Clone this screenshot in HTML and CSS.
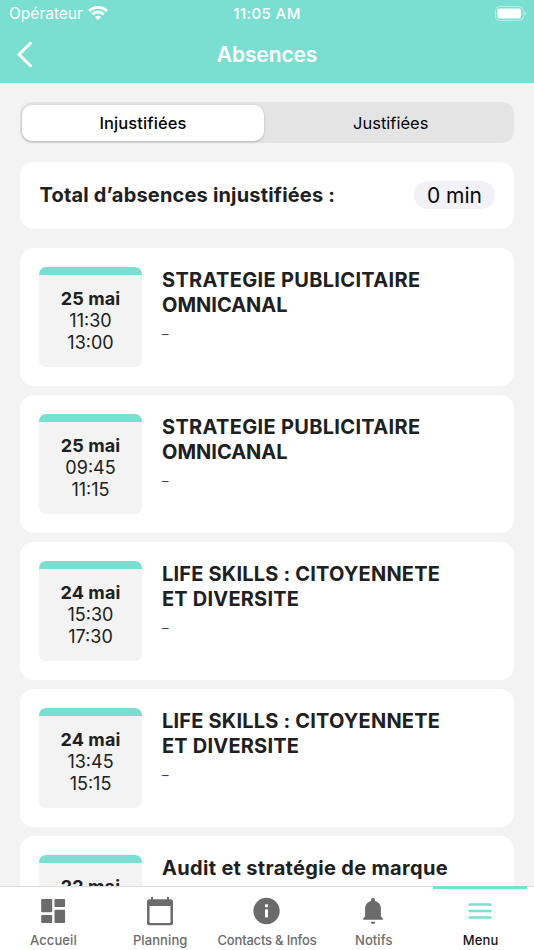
FILE: index.html
```html
<!DOCTYPE html>
<html lang="fr">
<head>
<meta charset="utf-8">
<meta name="viewport" content="width=device-width, initial-scale=1">
<title>Absences</title>
<link rel="stylesheet" href="styles.css">
</head>
<body>
<div class="app">
  <header class="header">
    <div class="status">
      <div class="carrier"><span>Opérateur</span>
        <svg width="20" height="16" viewBox="0 0 20 16" fill="none" stroke="#fff" stroke-width="2.9"><path d="M1.200 6a12.400 12.400 0 0 1 17.600 0"/><path d="M4.400 9.400a7.900 7.900 0 0 1 11.200 0"/><path d="M6.900 12.100a4.400 4.400 0 0 1 6.200 0L10 15.200z" fill="#fff" stroke="none"/></svg>
      </div>
      <time class="clock">11:05 AM</time>
      <svg class="battery" width="32" height="15" viewBox="0 0 32 15"><rect x=".5" y=".5" width="27.5" height="14" rx="4" fill="none" stroke="#fff" stroke-opacity=".45"/><rect x="2.3" y="2.6" width="23.7" height="9.800" rx="2" fill="#fff"/><path d="M29.5 5.2q1.7.5 1.7 2.2t-1.7 2.2z" fill="#fff" fill-opacity=".5"/></svg>
    </div>
    <div class="bar">
      <svg class="back" width="16" height="26" viewBox="0 0 16 26" fill="none" stroke="#fff" stroke-width="3" stroke-linecap="round" stroke-linejoin="round"><path d="M14.500 2.300 3 13.500l11.500 11.200"/></svg>
      <h1>Absences</h1>
    </div>
  </header>
  <main class="content">
    <div class="segments"><button class="segment selected">Injustifiées</button><button class="segment other">Justifiées</button></div>
    <section class="total"><h2>Total d’absences injustifiées :</h2><span class="pill">0 min</span></section>
    <section class="list">
      <article class="card"><div class="date"><b>25 mai</b><span>11:30</span><span>13:00</span></div><div class="info"><h3>STRATEGIE PUBLICITAIRE <span class="tight">OMNICANAL</span></h3><p>–</p></div></article>
      <article class="card"><div class="date"><b>25 mai</b><span>09:45</span><span>11:15</span></div><div class="info"><h3>STRATEGIE PUBLICITAIRE <span class="tight">OMNICANAL</span></h3><p>–</p></div></article>
      <article class="card"><div class="date"><b>24 mai</b><span>15:30</span><span>17:30</span></div><div class="info"><h3 class="life">LIFE SKILLS : CITOYENNETE<br>ET DIVERSITE</h3><p>–</p></div></article>
      <article class="card"><div class="date"><b>24 mai</b><span>13:45</span><span>15:15</span></div><div class="info"><h3 class="life">LIFE SKILLS : CITOYENNETE<br>ET DIVERSITE</h3><p>–</p></div></article>
      <article class="card"><div class="date"><b>22 mai</b></div><div class="info"><h3>Audit et stratégie de marque</h3></div></article>
    </section>
  </main>
  <nav class="tabs">
    <a class="tab"><svg width="32" height="32" viewBox="0 0 32 32" fill="currentColor"><rect x="4.200" y="4" width="11" height="13.300" rx="1"/><rect x="17.500" y="4" width="10.600" height="8" rx="1"/><rect x="4.200" y="20" width="11" height="8" rx="1"/><rect x="17.500" y="14.700" width="10.600" height="13.300" rx="1"/></svg><span>Accueil</span></a>
    <a class="tab"><svg width="32" height="32" viewBox="0 0 32 32"><path fill="currentColor" fill-rule="evenodd" d="M7 2.200q1.200-1 2 0v2h14v-2q.8-1 2 0v2h1.500q2.500 0 2.500 2.500v21q0 2.500-2.500 2.500h-21Q3 30.200 3 27.700v-21q0-2.500 2.500-2.500H7zM5.500 11v15.700q0 1.300 1.300 1.300h18.400q1.300 0 1.300-1.300V11z"/></svg><span>Planning</span></a>
    <a class="tab"><svg width="32" height="32" viewBox="0 0 32 32"><circle cx="16.500" cy="16" r="13.200" fill="currentColor"/><rect x="15" y="9.200" width="3" height="3" rx=".8" fill="#fff"/><rect x="15" y="14.300" width="3" height="8.300" rx=".8" fill="#fff"/></svg><span class="contacts">Contacts &amp; Infos</span></a>
    <a class="tab"><svg width="32" height="32" viewBox="0 0 32 32" fill="currentColor"><path d="M16 3q2 0 2 2v.9c4.100 1 5.900 4.200 5.900 8v7.600l2 2v1.200H6.100v-1.200l2-2v-7.600c0-3.800 1.800-7 5.900-8V5q0-2 2-2zM13.600 26.800h4.800q-.5 2.200-2.400 2.200t-2.400-2.200z"/></svg><span>Notifs</span></a>
    <a class="tab active"><svg width="32" height="32" viewBox="0 0 32 32" fill="none" stroke="#7adfd1" stroke-width="2.500" stroke-linecap="round"><path d="M5.500 9.500h21M5.500 16h21M5.500 22.500h21"/></svg><span>Menu</span></a>
  </nav>
</div>
</body>
</html>
```
FILE: styles.css
```css
* { box-sizing: border-box; }
body { margin: 0; font-family: Inter, sans-serif; color: #202020; background: #f3f3f3; }
h1, h2, h3, p { margin: 0; }
.app { height: 950px; display: flex; flex-direction: column; overflow: hidden; }
.header { height: 83px; flex: none; background: #7adfd1; color: #fff; }
.status { height: 28px; display: grid; grid-template-columns: 1fr auto 1fr; align-items: center; padding: 0 7px 0 9px; font-size: 15px; line-height: 20px; }
.carrier { display: flex; align-items: center; gap: 5px; font-size: 15.500px; }
.carrier svg { position: relative; top: -1px; }
.clock { font-weight: 500; letter-spacing: .4px; position: relative; left: -1px; }
.battery { justify-self: end; position: relative; top: -1px; }
.bar { height: 54px; display: grid; grid-template-columns: 1fr auto 1fr; align-items: center; padding: 0 16px; }
h1 { font-size: 21px; line-height: 28px; font-weight: 600; letter-spacing: -.1px; }
.back { position: relative; top: -1px; }
.content { flex: 1; min-height: 0; overflow: hidden; padding: 19px 20px 0; }
.segments { height: 41px; display: grid; grid-template-columns: 1fr 1fr; padding: 2.500px; border-radius: 12px; background: #e4e4e4; }
.segment { border: 0; padding: 0; border-radius: 10px; background: none; font: 500 16.500px/20px Inter, sans-serif; color: #050505; }
.selected { background: #fff; margin: 0 3px 0 -.5px; box-shadow: 0 1px 3px #0003; letter-spacing: .1px; }
.other { font-weight: 400; padding-left: 3px; }
.total { height: 67px; margin-top: 19px; padding: 0 19px 1px 20px; display: flex; align-items: center; justify-content: space-between; background: #fff; border-radius: 14px; }
h2 { font-size: 20px; line-height: 26px; font-weight: 650; letter-spacing: .18px; margin-left: -.5px; }
.pill { width: 81px; height: 28px; border-radius: 14px; background: #f2f1f7; color: #050505; font-size: 21px; line-height: 29px; text-align: center; }
.list { display: grid; gap: 9px; margin-top: 19px; }
.card { height: 138px; padding: 19px; display: flex; align-items: flex-start; gap: 20px; background: #fff; border-radius: 14px; }
.date { width: 103px; height: 100px; flex: none; display: flex; flex-direction: column; align-items: center; padding-top: 13px; border-top: 8px solid #7adfd1; border-radius: 7px; background: #f3f3f3; font-size: 18px; line-height: 22px; }
.date b { font-weight: 650; letter-spacing: .1px; }
.info { width: 290px; padding-top: 1px; }
h3 { font-size: 20px; line-height: 24.500px; font-weight: 650; letter-spacing: .32px; }
.life { letter-spacing: .2px; }
.tight { letter-spacing: 0; }
.info p { font-size: 13px; line-height: 20px; margin-top: 7px; color: #444; }
.tabs { height: 64px; flex: none; display: grid; grid-template-columns: repeat(5, 1fr); background: #fff; border-top: 1px solid #dedede; }
.tab { position: relative; display: flex; flex-direction: column; align-items: center; padding-top: 8px; color: #6b6b6b; font-size: 13px; line-height: 18px; font-weight: 450; letter-spacing: .1px; white-space: nowrap; }
.tab svg { flex: none; margin-left: -1px; }
.tab span { margin-top: 4px; }
.tab .contacts { letter-spacing: -.2px; }
.active { color: #151515; font-weight: 500; }
.active::before { content: ""; position: absolute; left: 6px; right: 7px; top: -1px; height: 3px; background: #7adfd1; }
```
